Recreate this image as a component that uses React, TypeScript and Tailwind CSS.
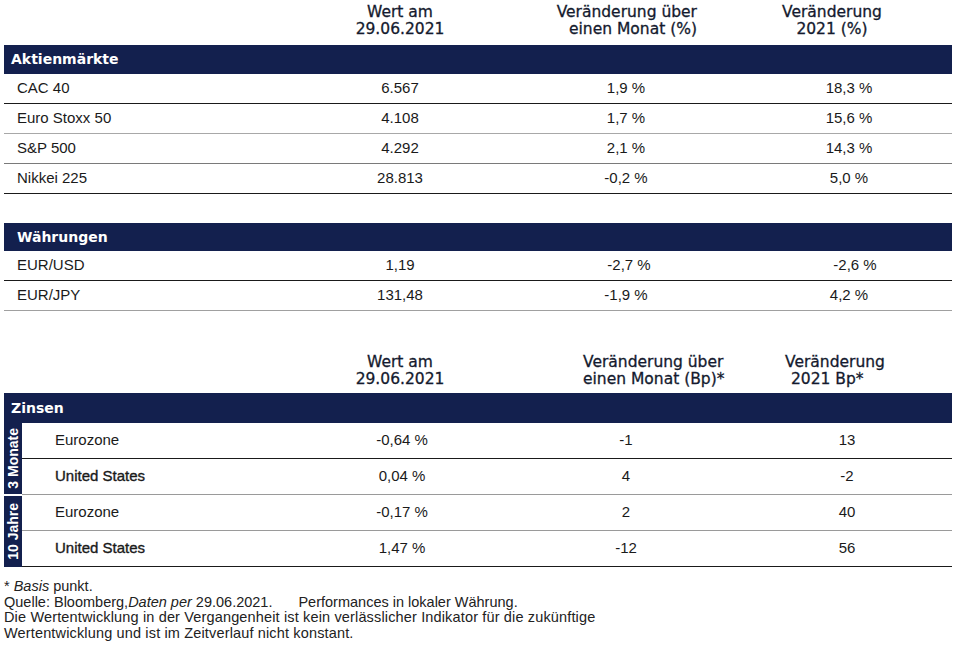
import React from "react";

const body = "font-['Liberation_Sans',Arial,sans-serif]";
const head = "font-['DejaVu_Sans',sans-serif]";

type R = {
  label: string;
  v1: string;
  v2: string;
  v3: string;
  line: string;
  c2?: string;
  c3?: string;
};

function Band({ title, h, pl }: { title: string; h: string; pl: string }) {
  return (
    <div
      className={`${h} ${pl} bg-[#13204e] flex items-center text-white text-[14px] font-bold ${head}`}
    >
      {title}
    </div>
  );
}

function TopRow({ r }: { r: R }) {
  return (
    <div className={`h-[30px] flex items-center border-b ${r.line} text-[15px]`}>
      <div className="w-[296px] pl-[13px]">{r.label}</div>
      <div className="w-[200px] text-center">{r.v1}</div>
      <div className={`w-[252px] text-center ${r.c2 ?? ""}`}>{r.v2}</div>
      <div className={`w-[194px] text-center ${r.c3 ?? ""}`}>{r.v3}</div>
    </div>
  );
}

function ZRow({ r, bold }: { r: R; bold?: boolean }) {
  return (
    <div className={`h-[36px] flex items-center border-b ${r.line} text-[15px]`}>
      <div className={`w-[278px] pl-[33px] ${bold ? "[-webkit-text-stroke:0.35px]" : ""}`}>
        {r.label}
      </div>
      <div className="w-[200px] text-center pl-[4px]">{r.v1}</div>
      <div className="w-[252px] text-center">{r.v2}</div>
      <div className="w-[194px] text-center pr-[4px]">{r.v3}</div>
    </div>
  );
}

const aktien: R[] = [
  { label: "CAC 40", v1: "6.567", v2: "1,9 %", v3: "18,3 %", line: "border-[#1a1a1a]" },
  { label: "Euro Stoxx 50", v1: "4.108", v2: "1,7 %", v3: "15,6 %", line: "border-[#a8a8a8]" },
  { label: "S&P 500", v1: "4.292", v2: "2,1 %", v3: "14,3 %", line: "border-[#7a7a7a]" },
  { label: "Nikkei 225", v1: "28.813", v2: "-0,2 %", v3: "5,0 %", line: "border-[#1a1a1a]" },
];

const waehr: R[] = [
  { label: "EUR/USD", v1: "1,19", v2: "-2,7 %", v3: "-2,6 %", line: "border-[#1a1a1a]", c2: "pl-[6px]", c3: "pl-[12px]" },
  { label: "EUR/JPY", v1: "131,48", v2: "-1,9 %", v3: "4,2 %", line: "border-[#a0a0a0]" },
];

const zinsen: R[] = [
  { label: "Eurozone", v1: "-0,64 %", v2: "-1", v3: "13", line: "border-[#1a1a1a]" },
  { label: "United States", v1: "0,04 %", v2: "4", v3: "-2", line: "border-[#9a9a9a]" },
  { label: "Eurozone", v1: "-0,17 %", v2: "2", v3: "40", line: "border-[#9a9a9a]" },
  { label: "United States", v1: "1,47 %", v2: "-12", v3: "56", line: "border-[#1a1a1a]" },
];

export default function App() {
  return (
    <div className={`w-[960px] h-[648px] bg-white overflow-hidden text-[#1a1a1a] ${body}`}>
      <div className="ml-[4px] w-[948px] flex flex-col">
        {/* Header 1 */}
        <div
          className={`flex h-[45px] pt-[4px] text-[15.5px] leading-[17px] text-[#141a2e] ${head} [-webkit-text-stroke:0.3px]`}
        >
          <div className="w-[296px]" />
          <div className="w-[200px] text-center">
            Wert am
            <br />
            29.06.2021
          </div>
          <div className="w-[252px] text-right pr-[55px]">
            Veränderung über
            <br />
            einen Monat (%)
          </div>
          <div className="w-[194px] text-center pr-[34px]">
            Veränderung
            <br />
            2021 (%)
          </div>
        </div>

        <Band title="Aktienmärkte" h="h-[29px]" pl="pl-[7px]" />
        {aktien.map((r, i) => (
          <TopRow key={i} r={r} />
        ))}

        <div className="h-[29px]" />
        <Band title="Währungen" h="h-[28px]" pl="pl-[13px]" />
        {waehr.map((r, i) => (
          <TopRow key={i} r={r} />
        ))}

        {/* Header 3 */}
        <div
          className={`flex h-[82px] pt-[43px] text-[15.5px] leading-[17px] text-[#141a2e] ${head} [-webkit-text-stroke:0.3px]`}
        >
          <div className="w-[296px]" />
          <div className="w-[200px] text-center">
            Wert am
            <br />
            29.06.2021
          </div>
          <div className="w-[252px] text-left pl-[83px]">
            Veränderung über
            <br />
            einen Monat (Bp)*
          </div>
          <div className="w-[194px] text-left pl-[33px]">
            Veränderung
            <br />
            <span className="pl-[6px]">2021 Bp*</span>
          </div>
        </div>

        <Band title="Zinsen" h="h-[30px]" pl="pl-[7px]" />
        <div className="flex">
          <div className="w-[18px] flex flex-col gap-[2px]">
            <div className="h-[71px] bg-[#13204e] flex items-center justify-center">
              <span className="[writing-mode:vertical-rl] rotate-180 text-white font-bold text-[14px] leading-none whitespace-nowrap">
                3 Monate
              </span>
            </div>
            <div className="h-[71px] bg-[#13204e] flex items-center justify-center">
              <span className="[writing-mode:vertical-rl] rotate-180 text-white font-bold text-[14px] leading-none whitespace-nowrap">
                10 Jahre
              </span>
            </div>
          </div>
          <div className="w-[930px] flex flex-col">
            {zinsen.map((r, i) => (
              <ZRow key={i} r={r} bold={r.label === "United States"} />
            ))}
          </div>
        </div>

        {/* Footer */}
        <div className="mt-[12px] text-[14.5px] leading-[15.5px] text-[#222]">
          <div>
            * <i>Basis</i> punkt.
          </div>
          <div>
            Quelle: Bloomberg,<i>Daten per</i> 29.06.2021.
            <span className="ml-[26px]">Performances in lokaler Währung.</span>
          </div>
          <div className="tracking-[0.15px]">
            Die Wertentwicklung in der Vergangenheit ist kein verlässlicher Indikator für die zukünftige
          </div>
          <div className="tracking-[0.15px]">Wertentwicklung und ist im Zeitverlauf nicht konstant.</div>
        </div>
      </div>
    </div>
  );
}
